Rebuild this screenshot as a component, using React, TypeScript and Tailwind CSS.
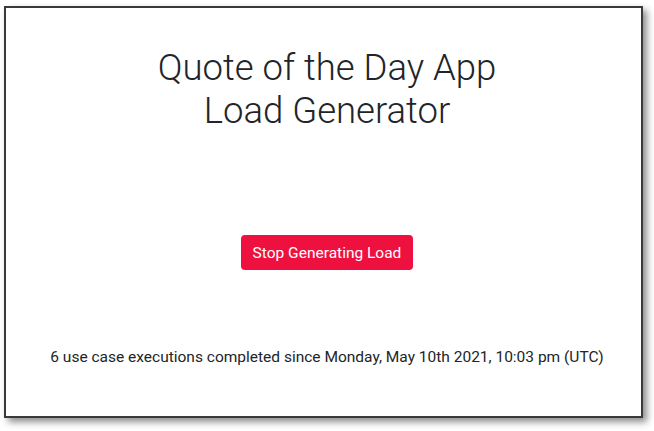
import React from "react";

export default function App() {
  return (
    <div className="w-[654px] h-[431px] bg-white pl-[4px] pt-[6px]" style={{ fontFamily: 'Roboto, "Liberation Sans", Arial, sans-serif' }}>
      <div className="w-[639px] h-[412px] border-2 border-[#3a3a3a] bg-white shadow-[4px_4px_7px_rgba(0,0,0,0.45)] flex flex-col items-center pl-[7px] text-[#212529]">
        <h1 className="mt-[38px] text-[36.5px] leading-[43px] font-light text-center">
          Quote of the Day App
          <br />
          Load Generator
        </h1>
        <button className="mt-[103px] h-[35px] px-[12px] rounded-[4px] bg-[#ee1140] text-white text-[15.5px] leading-[24px]">
          Stop Generating Load
        </button>
        <p className="mt-[75px] text-[15.5px] leading-[24px]">
          6 use case executions completed since Monday, May 10th 2021, 10:03 pm (UTC)
        </p>
      </div>
    </div>
  );
}
